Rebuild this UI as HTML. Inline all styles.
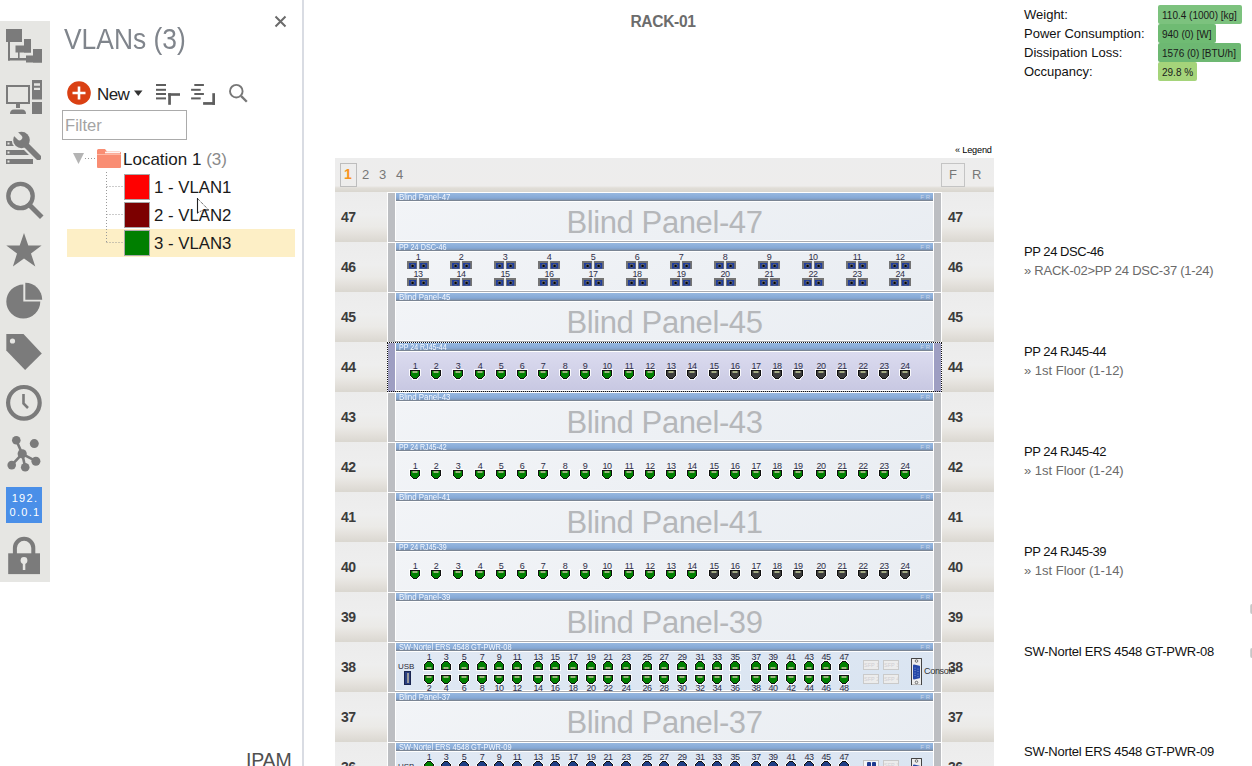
<!DOCTYPE html><html><head><meta charset="utf-8"><style>
*{margin:0;padding:0;box-sizing:border-box}
html,body{width:1252px;height:766px;overflow:hidden;background:#fff;font-family:"Liberation Sans",sans-serif;position:relative}
.a{position:absolute}
.num{position:absolute;width:52px;height:50px;background:linear-gradient(#ececec 0%,#eeeeee 45%,#ebeae7 70%,#e4e1dc 84%,#dad7d0 100%);font-weight:bold;font-size:14px;color:#3c3c3c;line-height:14px}
.num span{position:absolute;left:6px;top:18px;letter-spacing:-0.6px}
.rail{position:absolute;width:7px;background:#b9bbbf}
.pb{position:absolute;left:395px;width:539px;height:50px;background:#fff;border-bottom:1px solid #a9abb0}
.hd{position:absolute;left:1px;top:1px;width:537px;height:8px;background:linear-gradient(#97b8e0,#86a9d6 70%,#7f96b4);border-bottom:1px solid #7a8594;color:#f4f8ff;font-size:8.6px;line-height:8px;padding-left:3px;white-space:nowrap;overflow:hidden}
.hd b{font-weight:normal;display:inline-block;transform-origin:0 50%}
.hd i{position:absolute;right:3px;top:0;font-style:normal;font-size:6px;color:#c9d6e8;letter-spacing:0px}
.bd{position:absolute;left:1px;top:10px;width:537px;height:38px;background:linear-gradient(160deg,#f2f4f7,#e9edf2)}
.bl{position:absolute;left:0;top:5px;width:537px;text-align:center;font-size:31px;line-height:31px;color:#b5b7ba;letter-spacing:-0.4px}
.lb{position:absolute;font-size:9px;line-height:9px;color:#2e2e48;text-align:center;width:20px;letter-spacing:-0.5px}
.inf{position:absolute;left:1024px;font-size:13px;line-height:15px;color:#111;white-space:nowrap}
.inf2{position:absolute;left:1024px;font-size:13px;line-height:15px;color:#6a6a6a;white-space:nowrap}

</style></head><body>
<svg width="0" height="0" style="position:absolute"><defs>
<g id="rjd"><path d="M-1,-1H11V6H10V7H9V8H8V10H2V8H1V7H0V6H-1Z" fill="#fff" opacity=".85"/><path d="M0,0H10V6H9V7H8V8H7V9H3V8H2V7H1V6H0Z" fill="#111"/><path d="M1,1H9V6H8V7H7V8H3V7H2V6H1Z" fill="currentColor"/><rect x="2.5" y="1.2" width="5" height="1.6" fill="#c2c89a"/><rect x="4.5" y="1.2" width="1" height="1.6" fill="#98a878"/></g>
<g id="dsc"><rect x="0" y="0" width="10" height="8" fill="#747474"/><rect x="12" y="0" width="10" height="8" fill="#747474"/><rect x="10" y="0" width="2" height="8" fill="#e4e7ec"/><rect x="2" y="2" width="7.2" height="5.6" fill="#1f3d9c"/><rect x="13" y="2" width="7.2" height="5.6" fill="#1f3d9c"/><circle cx="5.6" cy="4.8" r="2" fill="#6a6a6a"/><circle cx="16.6" cy="4.8" r="2" fill="#6a6a6a"/><circle cx="5.6" cy="4.9" r="1.2" fill="#050505"/><circle cx="16.6" cy="4.9" r="1.2" fill="#050505"/></g>
</defs></svg>
<div class="a" style="left:0;top:21px;width:50px;height:561px;background:#e6e6e3"></div>
<svg class="a" style="left:0;top:0" width="50" height="600" viewBox="0 0 50 600">
<g fill="#7b7b7b">
<rect x="6" y="29" width="16" height="13"/>
<rect x="15.5" y="45.5" width="15.5" height="7"/><rect x="24" y="39" width="7" height="13.5"/>
<rect x="26" y="55.5" width="16" height="7"/><rect x="33" y="49" width="9" height="13.5"/>
<rect x="8" y="42" width="2" height="18.5"/><rect x="8" y="58" width="18" height="2.5"/><rect x="18" y="52" width="1.6" height="6"/>
</g>
<g fill="#7b7b7b">
<path d="M6,85H30V104H6Z M8,87V102H28V87Z" fill-rule="evenodd"/>
<rect x="16" y="104" width="4" height="4"/>
<path d="M10,114 Q10,109.5 14,109.5 H22 Q26,109.5 26,114Z"/>
<path d="M32,80H42V99.5H32Z M34,83.3V85.8H40V83.3Z M34,87.7V90.1H40V87.7Z" fill-rule="evenodd"/>
<rect x="32" y="102" width="10" height="12"/>
</g>
<g fill="#7b7b7b">
<path d="M6,141H14L19,146H6Z M7.5,142.5V144.5H9.5V142.5Z" fill-rule="evenodd"/>
<path d="M6,150H24L29,155H6Z M7.5,151.5V153.5H9.5V151.5Z" fill-rule="evenodd"/>
<path d="M6,159H33V164H6Z M7.5,160.5V162.5H9.5V160.5Z" fill-rule="evenodd"/>
</g>
<mask id="wm"><rect x="0" y="120" width="50" height="50" fill="#fff"/><path d="M10,128 L19.5,137.5" stroke="#000" stroke-width="5.5" stroke-linecap="round"/></mask>
<g mask="url(#wm)"><circle cx="21.5" cy="140" r="9.8" fill="#e6e6e3"/><path d="M22,141 L38.5,157.5" stroke="#e6e6e3" stroke-width="8.6" stroke-linecap="round"/><circle cx="21.5" cy="140" r="8.3" fill="#7b7b7b"/><path d="M22,141 L38.5,157.5" stroke="#7b7b7b" stroke-width="5.8" stroke-linecap="round"/></g>
<circle cx="20.5" cy="196" r="12.2" fill="none" stroke="#7b7b7b" stroke-width="4.3"/>
<path d="M29.5,205 L40,215.5" stroke="#7b7b7b" stroke-width="5" stroke-linecap="square"/>
<path d="M24,233 L28.3,245.6 L41.6,245.6 L31,253.6 L35.3,266.6 L24,258.6 L12.9,266.6 L17,253.6 L6.3,245.6 L19.7,245.6Z" fill="#7b7b7b"/>
<path d="M23.3,284.6 A17,17 0 1 0 40.3,301.6 L23.3,301.6 Z" fill="#7b7b7b"/>
<path d="M25.3,282.8 A16.9,16.9 0 0 1 42.2,299.7 L25.3,299.7 Z" fill="#7b7b7b"/>
<path d="M6.3,334 H23.5 L41.8,353.4 L25.1,370.1 L6.3,350.5Z" fill="#7b7b7b"/>
<circle cx="12.5" cy="341" r="2.6" fill="#e6e6e3"/>
<circle cx="23.9" cy="402.8" r="15.8" fill="none" stroke="#7b7b7b" stroke-width="4.2"/>
<path d="M23.5,394 V403.5 L28,408" fill="none" stroke="#7b7b7b" stroke-width="2.6"/>
<g stroke="#7b7b7b" stroke-width="2.6"><path d="M22.2,453.8 L16.3,440.3 M22.2,453.8 L11.7,465.1 M22.2,453.8 L25.2,467.2 M22.2,453.8 L35.9,461.2"/></g>
<g fill="#7b7b7b"><circle cx="22.2" cy="453.8" r="4.6"/><circle cx="16.3" cy="440.3" r="4.3"/><circle cx="34.3" cy="443.6" r="4.5"/><circle cx="11.7" cy="465.1" r="4.3"/><circle cx="25.2" cy="467.2" r="4.3"/><circle cx="35.9" cy="461.2" r="4.5"/></g>
<rect x="6" y="487" width="36" height="36" fill="#4a8fe8"/>
<path d="M14.9,554 V548 A9.2,9.2 0 0 1 33.3,548 V554" fill="none" stroke="#7b7b7b" stroke-width="4"/>
<rect x="8.2" y="553.3" width="31.8" height="20.8" fill="#7b7b7b"/>
<circle cx="24" cy="560.5" r="3.4" fill="#e6e6e3"/><rect x="22.8" y="561" width="2.5" height="9" fill="#e6e6e3"/>
</svg>
<div class="a" style="left:7px;top:492px;width:36px;text-align:center;color:#fff;font-size:11px;line-height:13.5px;letter-spacing:1.3px">192.<br>0.0.1</div>
<div class="a" style="left:302px;top:0;width:2px;height:766px;background:#d9dce3"></div>
<div class="a" style="left:64px;top:22px;font-size:30px;line-height:34px;color:#80858c;white-space:nowrap;transform:scaleX(0.88);transform-origin:0 0">VLANs (3)</div>
<svg class="a" style="left:274px;top:15px" width="13" height="13"><path d="M1.5,1.5 L11.5,11.5 M11.5,1.5 L1.5,11.5" stroke="#6b6b6b" stroke-width="2"/></svg>
<svg class="a" style="left:67px;top:81px" width="24" height="24"><circle cx="12" cy="12" r="11.8" fill="#da4013"/><path d="M12,5.5V18.5M5.5,12H18.5" stroke="#fff" stroke-width="2.6"/></svg>
<div class="a" style="left:97px;top:85px;font-size:17px;line-height:19px;color:#222;letter-spacing:-0.6px">New</div>
<svg class="a" style="left:134px;top:90px" width="9" height="7"><path d="M0,0.5H8.5L4.25,6Z" fill="#333"/></svg>
<svg class="a" style="left:155px;top:83px" width="28" height="23"><g fill="#5e5e5e"><rect x="1" y="1" width="10" height="2"/><rect x="1" y="5.8" width="10" height="2"/><rect x="1" y="10" width="10" height="2"/><rect x="1" y="14.4" width="10" height="2"/><rect x="13.2" y="10.2" width="11.8" height="2.6"/><rect x="13.2" y="10.2" width="2.7" height="11.6"/></g></svg>
<svg class="a" style="left:190px;top:83px" width="28" height="23"><g fill="#5e5e5e"><rect x="4.3" y="1" width="9.6" height="2"/><rect x="1.1" y="5.8" width="9.6" height="2"/><rect x="4.3" y="10" width="9.6" height="2"/><rect x="1.1" y="14.4" width="9.6" height="2"/><rect x="22.3" y="10.2" width="2.7" height="11.6"/><rect x="13.1" y="19.1" width="11.9" height="2.7"/></g></svg>
<svg class="a" style="left:228px;top:83px" width="22" height="22"><circle cx="8.3" cy="8.2" r="6.3" fill="none" stroke="#777" stroke-width="1.9"/><path d="M13.2,13.1L18.8,18.8" stroke="#777" stroke-width="2.3"/></svg>
<div class="a" style="left:62px;top:110px;width:125px;height:30px;border:1px solid #ababab;background:#fff"></div>
<div class="a" style="left:65px;top:116px;font-size:16.6px;line-height:19px;color:#a4a4a4">Filter</div>
<div class="a" style="left:67px;top:229px;width:228px;height:28px;background:#fdefc6"></div>
<svg class="a" style="left:70px;top:145px" width="60" height="115">
<path d="M3,8H14L8.5,19Z" fill="#b4b4b4"/>
<g stroke="#999" stroke-width="1" stroke-dasharray="1,2" fill="none"><path d="M15,13.5H26"/><path d="M36.5,27V97.5"/><path d="M36.5,41.5H53M36.5,69.5H53M36.5,97.5H53"/></g>
</svg>
<svg class="a" style="left:96px;top:148px" width="26" height="21"><path d="M1,2.5Q1,1 2.5,1H9L11,3.5H23.5Q25,3.5 25,5V19Q25,20 24,20H2Q1,20 1,19Z" fill="#f98d73"/><path d="M1,6.5H25" stroke="#fdb9a6" stroke-width="1"/><path d="M9,4.5H24" stroke="#fff" stroke-width="1.6" opacity=".9"/></svg>
<div class="a" style="left:123px;top:150px;font-size:17px;line-height:19px;color:#1a1a1a;white-space:nowrap">Location 1 <span style="color:#8a8a8a">(3)</span></div>
<div class="a" style="left:124px;top:174px;width:26px;height:26px;background:#ff0000;border:1px solid #a9a9a9"></div>
<div class="a" style="left:154px;top:178px;font-size:16.8px;line-height:19px;color:#1a1a1a;white-space:nowrap">1 - VLAN1</div>
<div class="a" style="left:124px;top:202px;width:26px;height:26px;background:#7c0000;border:1px solid #a9a9a9"></div>
<div class="a" style="left:154px;top:206px;font-size:16.8px;line-height:19px;color:#1a1a1a;white-space:nowrap">2 - VLAN2</div>
<div class="a" style="left:124px;top:230px;width:26px;height:26px;background:#007f00;border:1px solid #a9a9a9"></div>
<div class="a" style="left:154px;top:234px;font-size:16.8px;line-height:19px;color:#1a1a1a;white-space:nowrap">3 - VLAN3</div>
<svg class="a" style="left:196px;top:197px" width="14" height="20"><path d="M1.5,1 V16.5" stroke="#222" stroke-width="1.1"/><path d="M2,2 L12.3,12.6" stroke="#333" stroke-width="1" stroke-dasharray="1,1"/><path d="M8,13H12.8" stroke="#222" stroke-width="1.2"/><path d="M2,15.5 L6.5,13.4" stroke="#333" stroke-width="1" stroke-dasharray="1,1"/></svg>
<div class="a" style="left:246px;top:750px;font-size:19.5px;line-height:20px;color:#505050;letter-spacing:-0.2px">IPAM</div>
<div class="a" style="left:332px;top:13px;width:662px;text-align:center;font-size:15.6px;font-weight:bold;line-height:18px;color:#6c6c6c;letter-spacing:-0.35px">RACK-01</div>
<div class="a" style="left:955px;top:145px;font-size:9.2px;line-height:11px;color:#000;white-space:nowrap;letter-spacing:-0.2px">« Legend</div>
<div class="a" style="left:335px;top:158px;width:659px;height:34px;background:linear-gradient(#ededed 0%,#eeedec 82%,#e1ded8 88%,#d9d6cf 100%)"></div>
<div class="a" style="left:340px;top:163px;width:17px;height:24px;border:1px solid #bdbdbd"></div>
<div class="a" style="left:344px;top:166px;font-size:14px;line-height:16px;font-weight:bold;color:#f7941d">1</div>
<div class="a" style="left:362px;top:167px;font-size:13px;line-height:15px;color:#777">2</div>
<div class="a" style="left:379px;top:167px;font-size:13px;line-height:15px;color:#777">3</div>
<div class="a" style="left:396px;top:167px;font-size:13px;line-height:15px;color:#777">4</div>
<div class="a" style="left:941px;top:163px;width:24px;height:24px;border:1px solid #c4c4c4"></div>
<div class="a" style="left:949px;top:167px;font-size:13px;line-height:15px;color:#777">F</div>
<div class="a" style="left:972px;top:167px;font-size:13px;line-height:15px;color:#777">R</div>
<div class="num" style="left:335px;top:192px"><span>47</span></div>
<div class="num" style="left:942px;top:192px"><span>47</span></div>
<div class="rail" style="left:388px;top:193px;height:49px;background:#bcbec2"></div>
<div class="rail" style="left:934px;top:193px;height:49px;background:#bcbec2"></div>
<div class="pb" style="top:192px"><div class="hd"><b style="transform:scaleX(0.92)">Blind Panel-47</b><i>F R</i></div><div class="bd" style="">
<div class="bl">Blind Panel-47</div>
</div></div>
<div class="num" style="left:335px;top:242px"><span>46</span></div>
<div class="num" style="left:942px;top:242px"><span>46</span></div>
<div class="rail" style="left:388px;top:243px;height:49px;background:#bcbec2"></div>
<div class="rail" style="left:934px;top:243px;height:49px;background:#bcbec2"></div>
<div class="pb" style="top:242px"><div class="hd"><b style="transform:scaleX(0.845)">PP 24 DSC-46</b><i>F R</i></div><div class="bd" style="">
</div></div>
<div class="lb" style="left:408px;top:253px">1</div>
<svg class="a" style="left:407px;top:261px" width="22" height="8"><use href="#dsc"/></svg>
<div class="lb" style="left:451px;top:253px">2</div>
<svg class="a" style="left:450px;top:261px" width="22" height="8"><use href="#dsc"/></svg>
<div class="lb" style="left:495px;top:253px">3</div>
<svg class="a" style="left:494px;top:261px" width="22" height="8"><use href="#dsc"/></svg>
<div class="lb" style="left:539px;top:253px">4</div>
<svg class="a" style="left:538px;top:261px" width="22" height="8"><use href="#dsc"/></svg>
<div class="lb" style="left:583px;top:253px">5</div>
<svg class="a" style="left:582px;top:261px" width="22" height="8"><use href="#dsc"/></svg>
<div class="lb" style="left:627px;top:253px">6</div>
<svg class="a" style="left:626px;top:261px" width="22" height="8"><use href="#dsc"/></svg>
<div class="lb" style="left:671px;top:253px">7</div>
<svg class="a" style="left:670px;top:261px" width="22" height="8"><use href="#dsc"/></svg>
<div class="lb" style="left:715px;top:253px">8</div>
<svg class="a" style="left:714px;top:261px" width="22" height="8"><use href="#dsc"/></svg>
<div class="lb" style="left:759px;top:253px">9</div>
<svg class="a" style="left:758px;top:261px" width="22" height="8"><use href="#dsc"/></svg>
<div class="lb" style="left:803px;top:253px">10</div>
<svg class="a" style="left:802px;top:261px" width="22" height="8"><use href="#dsc"/></svg>
<div class="lb" style="left:847px;top:253px">11</div>
<svg class="a" style="left:846px;top:261px" width="22" height="8"><use href="#dsc"/></svg>
<div class="lb" style="left:890px;top:253px">12</div>
<svg class="a" style="left:889px;top:261px" width="22" height="8"><use href="#dsc"/></svg>
<div class="lb" style="left:408px;top:270px">13</div>
<svg class="a" style="left:407px;top:278px" width="22" height="8"><use href="#dsc"/></svg>
<div class="lb" style="left:451px;top:270px">14</div>
<svg class="a" style="left:450px;top:278px" width="22" height="8"><use href="#dsc"/></svg>
<div class="lb" style="left:495px;top:270px">15</div>
<svg class="a" style="left:494px;top:278px" width="22" height="8"><use href="#dsc"/></svg>
<div class="lb" style="left:539px;top:270px">16</div>
<svg class="a" style="left:538px;top:278px" width="22" height="8"><use href="#dsc"/></svg>
<div class="lb" style="left:583px;top:270px">17</div>
<svg class="a" style="left:582px;top:278px" width="22" height="8"><use href="#dsc"/></svg>
<div class="lb" style="left:627px;top:270px">18</div>
<svg class="a" style="left:626px;top:278px" width="22" height="8"><use href="#dsc"/></svg>
<div class="lb" style="left:671px;top:270px">19</div>
<svg class="a" style="left:670px;top:278px" width="22" height="8"><use href="#dsc"/></svg>
<div class="lb" style="left:715px;top:270px">20</div>
<svg class="a" style="left:714px;top:278px" width="22" height="8"><use href="#dsc"/></svg>
<div class="lb" style="left:759px;top:270px">21</div>
<svg class="a" style="left:758px;top:278px" width="22" height="8"><use href="#dsc"/></svg>
<div class="lb" style="left:803px;top:270px">22</div>
<svg class="a" style="left:802px;top:278px" width="22" height="8"><use href="#dsc"/></svg>
<div class="lb" style="left:847px;top:270px">23</div>
<svg class="a" style="left:846px;top:278px" width="22" height="8"><use href="#dsc"/></svg>
<div class="lb" style="left:890px;top:270px">24</div>
<svg class="a" style="left:889px;top:278px" width="22" height="8"><use href="#dsc"/></svg>
<div class="num" style="left:335px;top:292px"><span>45</span></div>
<div class="num" style="left:942px;top:292px"><span>45</span></div>
<div class="rail" style="left:388px;top:293px;height:49px;background:#bcbec2"></div>
<div class="rail" style="left:934px;top:293px;height:49px;background:#bcbec2"></div>
<div class="pb" style="top:292px"><div class="hd"><b style="transform:scaleX(0.92)">Blind Panel-45</b><i>F R</i></div><div class="bd" style="">
<div class="bl">Blind Panel-45</div>
</div></div>
<div class="num" style="left:335px;top:342px"><span>44</span></div>
<div class="num" style="left:942px;top:342px"><span>44</span></div>
<div class="rail" style="left:388px;top:343px;height:49px;background:#9e9ec2"></div>
<div class="rail" style="left:934px;top:343px;height:49px;background:#9e9ec2"></div>
<div class="pb" style="top:342px"><div class="hd"><b style="transform:scaleX(0.82)">PP 24 RJ45-44</b><i>F R</i></div><div class="bd" style="background:linear-gradient(#dbdbef,#d2d2e9 50%,#c8c8e2)">
</div></div>
<div class="a" style="left:387px;top:342px;width:555px;height:50px;border:1px dotted #111"></div>
<div class="lb" style="left:405px;top:362px">1</div>
<svg class="a" style="left:410px;top:370px;color:#008000;overflow:visible" width="10" height="9"><use href="#rjd"/></svg>
<div class="lb" style="left:426px;top:362px">2</div>
<svg class="a" style="left:431px;top:370px;color:#008000;overflow:visible" width="10" height="9"><use href="#rjd"/></svg>
<div class="lb" style="left:448px;top:362px">3</div>
<svg class="a" style="left:453px;top:370px;color:#008000;overflow:visible" width="10" height="9"><use href="#rjd"/></svg>
<div class="lb" style="left:470px;top:362px">4</div>
<svg class="a" style="left:475px;top:370px;color:#008000;overflow:visible" width="10" height="9"><use href="#rjd"/></svg>
<div class="lb" style="left:491px;top:362px">5</div>
<svg class="a" style="left:496px;top:370px;color:#008000;overflow:visible" width="10" height="9"><use href="#rjd"/></svg>
<div class="lb" style="left:512px;top:362px">6</div>
<svg class="a" style="left:517px;top:370px;color:#008000;overflow:visible" width="10" height="9"><use href="#rjd"/></svg>
<div class="lb" style="left:533px;top:362px">7</div>
<svg class="a" style="left:538px;top:370px;color:#008000;overflow:visible" width="10" height="9"><use href="#rjd"/></svg>
<div class="lb" style="left:555px;top:362px">8</div>
<svg class="a" style="left:560px;top:370px;color:#008000;overflow:visible" width="10" height="9"><use href="#rjd"/></svg>
<div class="lb" style="left:575px;top:362px">9</div>
<svg class="a" style="left:580px;top:370px;color:#008000;overflow:visible" width="10" height="9"><use href="#rjd"/></svg>
<div class="lb" style="left:597px;top:362px">10</div>
<svg class="a" style="left:602px;top:370px;color:#008000;overflow:visible" width="10" height="9"><use href="#rjd"/></svg>
<div class="lb" style="left:619px;top:362px">11</div>
<svg class="a" style="left:624px;top:370px;color:#008000;overflow:visible" width="10" height="9"><use href="#rjd"/></svg>
<div class="lb" style="left:640px;top:362px">12</div>
<svg class="a" style="left:645px;top:370px;color:#008000;overflow:visible" width="10" height="9"><use href="#rjd"/></svg>
<div class="lb" style="left:661px;top:362px">13</div>
<svg class="a" style="left:666px;top:370px;color:#3c3c3c;overflow:visible" width="10" height="9"><use href="#rjd"/></svg>
<div class="lb" style="left:682px;top:362px">14</div>
<svg class="a" style="left:687px;top:370px;color:#3c3c3c;overflow:visible" width="10" height="9"><use href="#rjd"/></svg>
<div class="lb" style="left:704px;top:362px">15</div>
<svg class="a" style="left:709px;top:370px;color:#3c3c3c;overflow:visible" width="10" height="9"><use href="#rjd"/></svg>
<div class="lb" style="left:725px;top:362px">16</div>
<svg class="a" style="left:730px;top:370px;color:#3c3c3c;overflow:visible" width="10" height="9"><use href="#rjd"/></svg>
<div class="lb" style="left:746px;top:362px">17</div>
<svg class="a" style="left:751px;top:370px;color:#3c3c3c;overflow:visible" width="10" height="9"><use href="#rjd"/></svg>
<div class="lb" style="left:767px;top:362px">18</div>
<svg class="a" style="left:772px;top:370px;color:#3c3c3c;overflow:visible" width="10" height="9"><use href="#rjd"/></svg>
<div class="lb" style="left:788px;top:362px">19</div>
<svg class="a" style="left:793px;top:370px;color:#3c3c3c;overflow:visible" width="10" height="9"><use href="#rjd"/></svg>
<div class="lb" style="left:811px;top:362px">20</div>
<svg class="a" style="left:816px;top:370px;color:#3c3c3c;overflow:visible" width="10" height="9"><use href="#rjd"/></svg>
<div class="lb" style="left:832px;top:362px">21</div>
<svg class="a" style="left:837px;top:370px;color:#3c3c3c;overflow:visible" width="10" height="9"><use href="#rjd"/></svg>
<div class="lb" style="left:853px;top:362px">22</div>
<svg class="a" style="left:858px;top:370px;color:#3c3c3c;overflow:visible" width="10" height="9"><use href="#rjd"/></svg>
<div class="lb" style="left:874px;top:362px">23</div>
<svg class="a" style="left:879px;top:370px;color:#3c3c3c;overflow:visible" width="10" height="9"><use href="#rjd"/></svg>
<div class="lb" style="left:895px;top:362px">24</div>
<svg class="a" style="left:900px;top:370px;color:#3c3c3c;overflow:visible" width="10" height="9"><use href="#rjd"/></svg>
<div class="num" style="left:335px;top:392px"><span>43</span></div>
<div class="num" style="left:942px;top:392px"><span>43</span></div>
<div class="rail" style="left:388px;top:393px;height:49px;background:#bcbec2"></div>
<div class="rail" style="left:934px;top:393px;height:49px;background:#bcbec2"></div>
<div class="pb" style="top:392px"><div class="hd"><b style="transform:scaleX(0.92)">Blind Panel-43</b><i>F R</i></div><div class="bd" style="">
<div class="bl">Blind Panel-43</div>
</div></div>
<div class="num" style="left:335px;top:442px"><span>42</span></div>
<div class="num" style="left:942px;top:442px"><span>42</span></div>
<div class="rail" style="left:388px;top:443px;height:49px;background:#bcbec2"></div>
<div class="rail" style="left:934px;top:443px;height:49px;background:#bcbec2"></div>
<div class="pb" style="top:442px"><div class="hd"><b style="transform:scaleX(0.82)">PP 24 RJ45-42</b><i>F R</i></div><div class="bd" style="">
</div></div>
<div class="lb" style="left:405px;top:462px">1</div>
<svg class="a" style="left:410px;top:470px;color:#008000;overflow:visible" width="10" height="9"><use href="#rjd"/></svg>
<div class="lb" style="left:426px;top:462px">2</div>
<svg class="a" style="left:431px;top:470px;color:#008000;overflow:visible" width="10" height="9"><use href="#rjd"/></svg>
<div class="lb" style="left:448px;top:462px">3</div>
<svg class="a" style="left:453px;top:470px;color:#008000;overflow:visible" width="10" height="9"><use href="#rjd"/></svg>
<div class="lb" style="left:470px;top:462px">4</div>
<svg class="a" style="left:475px;top:470px;color:#008000;overflow:visible" width="10" height="9"><use href="#rjd"/></svg>
<div class="lb" style="left:491px;top:462px">5</div>
<svg class="a" style="left:496px;top:470px;color:#008000;overflow:visible" width="10" height="9"><use href="#rjd"/></svg>
<div class="lb" style="left:512px;top:462px">6</div>
<svg class="a" style="left:517px;top:470px;color:#008000;overflow:visible" width="10" height="9"><use href="#rjd"/></svg>
<div class="lb" style="left:533px;top:462px">7</div>
<svg class="a" style="left:538px;top:470px;color:#008000;overflow:visible" width="10" height="9"><use href="#rjd"/></svg>
<div class="lb" style="left:555px;top:462px">8</div>
<svg class="a" style="left:560px;top:470px;color:#008000;overflow:visible" width="10" height="9"><use href="#rjd"/></svg>
<div class="lb" style="left:575px;top:462px">9</div>
<svg class="a" style="left:580px;top:470px;color:#008000;overflow:visible" width="10" height="9"><use href="#rjd"/></svg>
<div class="lb" style="left:597px;top:462px">10</div>
<svg class="a" style="left:602px;top:470px;color:#008000;overflow:visible" width="10" height="9"><use href="#rjd"/></svg>
<div class="lb" style="left:619px;top:462px">11</div>
<svg class="a" style="left:624px;top:470px;color:#008000;overflow:visible" width="10" height="9"><use href="#rjd"/></svg>
<div class="lb" style="left:640px;top:462px">12</div>
<svg class="a" style="left:645px;top:470px;color:#008000;overflow:visible" width="10" height="9"><use href="#rjd"/></svg>
<div class="lb" style="left:661px;top:462px">13</div>
<svg class="a" style="left:666px;top:470px;color:#008000;overflow:visible" width="10" height="9"><use href="#rjd"/></svg>
<div class="lb" style="left:682px;top:462px">14</div>
<svg class="a" style="left:687px;top:470px;color:#008000;overflow:visible" width="10" height="9"><use href="#rjd"/></svg>
<div class="lb" style="left:704px;top:462px">15</div>
<svg class="a" style="left:709px;top:470px;color:#008000;overflow:visible" width="10" height="9"><use href="#rjd"/></svg>
<div class="lb" style="left:725px;top:462px">16</div>
<svg class="a" style="left:730px;top:470px;color:#008000;overflow:visible" width="10" height="9"><use href="#rjd"/></svg>
<div class="lb" style="left:746px;top:462px">17</div>
<svg class="a" style="left:751px;top:470px;color:#008000;overflow:visible" width="10" height="9"><use href="#rjd"/></svg>
<div class="lb" style="left:767px;top:462px">18</div>
<svg class="a" style="left:772px;top:470px;color:#008000;overflow:visible" width="10" height="9"><use href="#rjd"/></svg>
<div class="lb" style="left:788px;top:462px">19</div>
<svg class="a" style="left:793px;top:470px;color:#008000;overflow:visible" width="10" height="9"><use href="#rjd"/></svg>
<div class="lb" style="left:811px;top:462px">20</div>
<svg class="a" style="left:816px;top:470px;color:#008000;overflow:visible" width="10" height="9"><use href="#rjd"/></svg>
<div class="lb" style="left:832px;top:462px">21</div>
<svg class="a" style="left:837px;top:470px;color:#008000;overflow:visible" width="10" height="9"><use href="#rjd"/></svg>
<div class="lb" style="left:853px;top:462px">22</div>
<svg class="a" style="left:858px;top:470px;color:#008000;overflow:visible" width="10" height="9"><use href="#rjd"/></svg>
<div class="lb" style="left:874px;top:462px">23</div>
<svg class="a" style="left:879px;top:470px;color:#008000;overflow:visible" width="10" height="9"><use href="#rjd"/></svg>
<div class="lb" style="left:895px;top:462px">24</div>
<svg class="a" style="left:900px;top:470px;color:#008000;overflow:visible" width="10" height="9"><use href="#rjd"/></svg>
<div class="num" style="left:335px;top:492px"><span>41</span></div>
<div class="num" style="left:942px;top:492px"><span>41</span></div>
<div class="rail" style="left:388px;top:493px;height:49px;background:#bcbec2"></div>
<div class="rail" style="left:934px;top:493px;height:49px;background:#bcbec2"></div>
<div class="pb" style="top:492px"><div class="hd"><b style="transform:scaleX(0.92)">Blind Panel-41</b><i>F R</i></div><div class="bd" style="">
<div class="bl">Blind Panel-41</div>
</div></div>
<div class="num" style="left:335px;top:542px"><span>40</span></div>
<div class="num" style="left:942px;top:542px"><span>40</span></div>
<div class="rail" style="left:388px;top:543px;height:49px;background:#bcbec2"></div>
<div class="rail" style="left:934px;top:543px;height:49px;background:#bcbec2"></div>
<div class="pb" style="top:542px"><div class="hd"><b style="transform:scaleX(0.82)">PP 24 RJ45-39</b><i>F R</i></div><div class="bd" style="">
</div></div>
<div class="lb" style="left:405px;top:562px">1</div>
<svg class="a" style="left:410px;top:570px;color:#008000;overflow:visible" width="10" height="9"><use href="#rjd"/></svg>
<div class="lb" style="left:426px;top:562px">2</div>
<svg class="a" style="left:431px;top:570px;color:#008000;overflow:visible" width="10" height="9"><use href="#rjd"/></svg>
<div class="lb" style="left:448px;top:562px">3</div>
<svg class="a" style="left:453px;top:570px;color:#008000;overflow:visible" width="10" height="9"><use href="#rjd"/></svg>
<div class="lb" style="left:470px;top:562px">4</div>
<svg class="a" style="left:475px;top:570px;color:#008000;overflow:visible" width="10" height="9"><use href="#rjd"/></svg>
<div class="lb" style="left:491px;top:562px">5</div>
<svg class="a" style="left:496px;top:570px;color:#008000;overflow:visible" width="10" height="9"><use href="#rjd"/></svg>
<div class="lb" style="left:512px;top:562px">6</div>
<svg class="a" style="left:517px;top:570px;color:#008000;overflow:visible" width="10" height="9"><use href="#rjd"/></svg>
<div class="lb" style="left:533px;top:562px">7</div>
<svg class="a" style="left:538px;top:570px;color:#008000;overflow:visible" width="10" height="9"><use href="#rjd"/></svg>
<div class="lb" style="left:555px;top:562px">8</div>
<svg class="a" style="left:560px;top:570px;color:#008000;overflow:visible" width="10" height="9"><use href="#rjd"/></svg>
<div class="lb" style="left:575px;top:562px">9</div>
<svg class="a" style="left:580px;top:570px;color:#008000;overflow:visible" width="10" height="9"><use href="#rjd"/></svg>
<div class="lb" style="left:597px;top:562px">10</div>
<svg class="a" style="left:602px;top:570px;color:#008000;overflow:visible" width="10" height="9"><use href="#rjd"/></svg>
<div class="lb" style="left:619px;top:562px">11</div>
<svg class="a" style="left:624px;top:570px;color:#008000;overflow:visible" width="10" height="9"><use href="#rjd"/></svg>
<div class="lb" style="left:640px;top:562px">12</div>
<svg class="a" style="left:645px;top:570px;color:#008000;overflow:visible" width="10" height="9"><use href="#rjd"/></svg>
<div class="lb" style="left:661px;top:562px">13</div>
<svg class="a" style="left:666px;top:570px;color:#008000;overflow:visible" width="10" height="9"><use href="#rjd"/></svg>
<div class="lb" style="left:682px;top:562px">14</div>
<svg class="a" style="left:687px;top:570px;color:#008000;overflow:visible" width="10" height="9"><use href="#rjd"/></svg>
<div class="lb" style="left:704px;top:562px">15</div>
<svg class="a" style="left:709px;top:570px;color:#3c3c3c;overflow:visible" width="10" height="9"><use href="#rjd"/></svg>
<div class="lb" style="left:725px;top:562px">16</div>
<svg class="a" style="left:730px;top:570px;color:#3c3c3c;overflow:visible" width="10" height="9"><use href="#rjd"/></svg>
<div class="lb" style="left:746px;top:562px">17</div>
<svg class="a" style="left:751px;top:570px;color:#3c3c3c;overflow:visible" width="10" height="9"><use href="#rjd"/></svg>
<div class="lb" style="left:767px;top:562px">18</div>
<svg class="a" style="left:772px;top:570px;color:#3c3c3c;overflow:visible" width="10" height="9"><use href="#rjd"/></svg>
<div class="lb" style="left:788px;top:562px">19</div>
<svg class="a" style="left:793px;top:570px;color:#3c3c3c;overflow:visible" width="10" height="9"><use href="#rjd"/></svg>
<div class="lb" style="left:811px;top:562px">20</div>
<svg class="a" style="left:816px;top:570px;color:#3c3c3c;overflow:visible" width="10" height="9"><use href="#rjd"/></svg>
<div class="lb" style="left:832px;top:562px">21</div>
<svg class="a" style="left:837px;top:570px;color:#3c3c3c;overflow:visible" width="10" height="9"><use href="#rjd"/></svg>
<div class="lb" style="left:853px;top:562px">22</div>
<svg class="a" style="left:858px;top:570px;color:#3c3c3c;overflow:visible" width="10" height="9"><use href="#rjd"/></svg>
<div class="lb" style="left:874px;top:562px">23</div>
<svg class="a" style="left:879px;top:570px;color:#3c3c3c;overflow:visible" width="10" height="9"><use href="#rjd"/></svg>
<div class="lb" style="left:895px;top:562px">24</div>
<svg class="a" style="left:900px;top:570px;color:#3c3c3c;overflow:visible" width="10" height="9"><use href="#rjd"/></svg>
<div class="num" style="left:335px;top:592px"><span>39</span></div>
<div class="num" style="left:942px;top:592px"><span>39</span></div>
<div class="rail" style="left:388px;top:593px;height:49px;background:#bcbec2"></div>
<div class="rail" style="left:934px;top:593px;height:49px;background:#bcbec2"></div>
<div class="pb" style="top:592px"><div class="hd"><b style="transform:scaleX(0.92)">Blind Panel-39</b><i>F R</i></div><div class="bd" style="">
<div class="bl">Blind Panel-39</div>
</div></div>
<div class="num" style="left:335px;top:642px"><span>38</span></div>
<div class="num" style="left:942px;top:642px"><span>38</span></div>
<div class="rail" style="left:388px;top:643px;height:49px;background:#bcbec2"></div>
<div class="rail" style="left:934px;top:643px;height:49px;background:#bcbec2"></div>
<div class="pb" style="top:642px"><div class="hd"><b style="transform:scaleX(0.864)">SW-Nortel ERS 4548 GT-PWR-08</b><i>F R</i></div><div class="bd" style="background:linear-gradient(170deg,#e1e9f4,#d9e4f1)">
</div></div>
<div class="lb" style="left:419px;top:653px">1</div>
<svg class="a" style="left:424px;top:661px;color:#008000;overflow:visible" width="10" height="9"><use href="#rjd" transform="translate(0,9) scale(1,-1)"/></svg>
<svg class="a" style="left:424px;top:675px;color:#008000;overflow:visible" width="10" height="9"><use href="#rjd"/></svg>
<div class="lb" style="left:419px;top:684px">2</div>
<div class="lb" style="left:436px;top:653px">3</div>
<svg class="a" style="left:441px;top:661px;color:#008000;overflow:visible" width="10" height="9"><use href="#rjd" transform="translate(0,9) scale(1,-1)"/></svg>
<svg class="a" style="left:441px;top:675px;color:#008000;overflow:visible" width="10" height="9"><use href="#rjd"/></svg>
<div class="lb" style="left:436px;top:684px">4</div>
<div class="lb" style="left:454px;top:653px">5</div>
<svg class="a" style="left:459px;top:661px;color:#008000;overflow:visible" width="10" height="9"><use href="#rjd" transform="translate(0,9) scale(1,-1)"/></svg>
<svg class="a" style="left:459px;top:675px;color:#008000;overflow:visible" width="10" height="9"><use href="#rjd"/></svg>
<div class="lb" style="left:454px;top:684px">6</div>
<div class="lb" style="left:472px;top:653px">7</div>
<svg class="a" style="left:477px;top:661px;color:#008000;overflow:visible" width="10" height="9"><use href="#rjd" transform="translate(0,9) scale(1,-1)"/></svg>
<svg class="a" style="left:477px;top:675px;color:#008000;overflow:visible" width="10" height="9"><use href="#rjd"/></svg>
<div class="lb" style="left:472px;top:684px">8</div>
<div class="lb" style="left:489px;top:653px">9</div>
<svg class="a" style="left:494px;top:661px;color:#008000;overflow:visible" width="10" height="9"><use href="#rjd" transform="translate(0,9) scale(1,-1)"/></svg>
<svg class="a" style="left:494px;top:675px;color:#008000;overflow:visible" width="10" height="9"><use href="#rjd"/></svg>
<div class="lb" style="left:489px;top:684px">10</div>
<div class="lb" style="left:507px;top:653px">11</div>
<svg class="a" style="left:512px;top:661px;color:#008000;overflow:visible" width="10" height="9"><use href="#rjd" transform="translate(0,9) scale(1,-1)"/></svg>
<svg class="a" style="left:512px;top:675px;color:#008000;overflow:visible" width="10" height="9"><use href="#rjd"/></svg>
<div class="lb" style="left:507px;top:684px">12</div>
<div class="lb" style="left:528px;top:653px">13</div>
<svg class="a" style="left:533px;top:661px;color:#008000;overflow:visible" width="10" height="9"><use href="#rjd" transform="translate(0,9) scale(1,-1)"/></svg>
<svg class="a" style="left:533px;top:675px;color:#008000;overflow:visible" width="10" height="9"><use href="#rjd"/></svg>
<div class="lb" style="left:528px;top:684px">14</div>
<div class="lb" style="left:545px;top:653px">15</div>
<svg class="a" style="left:550px;top:661px;color:#008000;overflow:visible" width="10" height="9"><use href="#rjd" transform="translate(0,9) scale(1,-1)"/></svg>
<svg class="a" style="left:550px;top:675px;color:#008000;overflow:visible" width="10" height="9"><use href="#rjd"/></svg>
<div class="lb" style="left:545px;top:684px">16</div>
<div class="lb" style="left:563px;top:653px">17</div>
<svg class="a" style="left:568px;top:661px;color:#008000;overflow:visible" width="10" height="9"><use href="#rjd" transform="translate(0,9) scale(1,-1)"/></svg>
<svg class="a" style="left:568px;top:675px;color:#008000;overflow:visible" width="10" height="9"><use href="#rjd"/></svg>
<div class="lb" style="left:563px;top:684px">18</div>
<div class="lb" style="left:581px;top:653px">19</div>
<svg class="a" style="left:586px;top:661px;color:#008000;overflow:visible" width="10" height="9"><use href="#rjd" transform="translate(0,9) scale(1,-1)"/></svg>
<svg class="a" style="left:586px;top:675px;color:#008000;overflow:visible" width="10" height="9"><use href="#rjd"/></svg>
<div class="lb" style="left:581px;top:684px">20</div>
<div class="lb" style="left:598px;top:653px">21</div>
<svg class="a" style="left:603px;top:661px;color:#008000;overflow:visible" width="10" height="9"><use href="#rjd" transform="translate(0,9) scale(1,-1)"/></svg>
<svg class="a" style="left:603px;top:675px;color:#008000;overflow:visible" width="10" height="9"><use href="#rjd"/></svg>
<div class="lb" style="left:598px;top:684px">22</div>
<div class="lb" style="left:616px;top:653px">23</div>
<svg class="a" style="left:621px;top:661px;color:#008000;overflow:visible" width="10" height="9"><use href="#rjd" transform="translate(0,9) scale(1,-1)"/></svg>
<svg class="a" style="left:621px;top:675px;color:#008000;overflow:visible" width="10" height="9"><use href="#rjd"/></svg>
<div class="lb" style="left:616px;top:684px">24</div>
<div class="lb" style="left:637px;top:653px">25</div>
<svg class="a" style="left:642px;top:661px;color:#008000;overflow:visible" width="10" height="9"><use href="#rjd" transform="translate(0,9) scale(1,-1)"/></svg>
<svg class="a" style="left:642px;top:675px;color:#008000;overflow:visible" width="10" height="9"><use href="#rjd"/></svg>
<div class="lb" style="left:637px;top:684px">26</div>
<div class="lb" style="left:654px;top:653px">27</div>
<svg class="a" style="left:659px;top:661px;color:#008000;overflow:visible" width="10" height="9"><use href="#rjd" transform="translate(0,9) scale(1,-1)"/></svg>
<svg class="a" style="left:659px;top:675px;color:#008000;overflow:visible" width="10" height="9"><use href="#rjd"/></svg>
<div class="lb" style="left:654px;top:684px">28</div>
<div class="lb" style="left:672px;top:653px">29</div>
<svg class="a" style="left:677px;top:661px;color:#008000;overflow:visible" width="10" height="9"><use href="#rjd" transform="translate(0,9) scale(1,-1)"/></svg>
<svg class="a" style="left:677px;top:675px;color:#008000;overflow:visible" width="10" height="9"><use href="#rjd"/></svg>
<div class="lb" style="left:672px;top:684px">30</div>
<div class="lb" style="left:690px;top:653px">31</div>
<svg class="a" style="left:695px;top:661px;color:#008000;overflow:visible" width="10" height="9"><use href="#rjd" transform="translate(0,9) scale(1,-1)"/></svg>
<svg class="a" style="left:695px;top:675px;color:#008000;overflow:visible" width="10" height="9"><use href="#rjd"/></svg>
<div class="lb" style="left:690px;top:684px">32</div>
<div class="lb" style="left:707px;top:653px">33</div>
<svg class="a" style="left:712px;top:661px;color:#008000;overflow:visible" width="10" height="9"><use href="#rjd" transform="translate(0,9) scale(1,-1)"/></svg>
<svg class="a" style="left:712px;top:675px;color:#008000;overflow:visible" width="10" height="9"><use href="#rjd"/></svg>
<div class="lb" style="left:707px;top:684px">34</div>
<div class="lb" style="left:725px;top:653px">35</div>
<svg class="a" style="left:730px;top:661px;color:#008000;overflow:visible" width="10" height="9"><use href="#rjd" transform="translate(0,9) scale(1,-1)"/></svg>
<svg class="a" style="left:730px;top:675px;color:#008000;overflow:visible" width="10" height="9"><use href="#rjd"/></svg>
<div class="lb" style="left:725px;top:684px">36</div>
<div class="lb" style="left:746px;top:653px">37</div>
<svg class="a" style="left:751px;top:661px;color:#008000;overflow:visible" width="10" height="9"><use href="#rjd" transform="translate(0,9) scale(1,-1)"/></svg>
<svg class="a" style="left:751px;top:675px;color:#008000;overflow:visible" width="10" height="9"><use href="#rjd"/></svg>
<div class="lb" style="left:746px;top:684px">38</div>
<div class="lb" style="left:763px;top:653px">39</div>
<svg class="a" style="left:768px;top:661px;color:#008000;overflow:visible" width="10" height="9"><use href="#rjd" transform="translate(0,9) scale(1,-1)"/></svg>
<svg class="a" style="left:768px;top:675px;color:#008000;overflow:visible" width="10" height="9"><use href="#rjd"/></svg>
<div class="lb" style="left:763px;top:684px">40</div>
<div class="lb" style="left:781px;top:653px">41</div>
<svg class="a" style="left:786px;top:661px;color:#008000;overflow:visible" width="10" height="9"><use href="#rjd" transform="translate(0,9) scale(1,-1)"/></svg>
<svg class="a" style="left:786px;top:675px;color:#008000;overflow:visible" width="10" height="9"><use href="#rjd"/></svg>
<div class="lb" style="left:781px;top:684px">42</div>
<div class="lb" style="left:799px;top:653px">43</div>
<svg class="a" style="left:804px;top:661px;color:#008000;overflow:visible" width="10" height="9"><use href="#rjd" transform="translate(0,9) scale(1,-1)"/></svg>
<svg class="a" style="left:804px;top:675px;color:#008000;overflow:visible" width="10" height="9"><use href="#rjd"/></svg>
<div class="lb" style="left:799px;top:684px">44</div>
<div class="lb" style="left:816px;top:653px">45</div>
<svg class="a" style="left:821px;top:661px;color:#008000;overflow:visible" width="10" height="9"><use href="#rjd" transform="translate(0,9) scale(1,-1)"/></svg>
<svg class="a" style="left:821px;top:675px;color:#008000;overflow:visible" width="10" height="9"><use href="#rjd"/></svg>
<div class="lb" style="left:816px;top:684px">46</div>
<div class="lb" style="left:834px;top:653px">47</div>
<svg class="a" style="left:839px;top:661px;color:#008000;overflow:visible" width="10" height="9"><use href="#rjd" transform="translate(0,9) scale(1,-1)"/></svg>
<svg class="a" style="left:839px;top:675px;color:#008000;overflow:visible" width="10" height="9"><use href="#rjd"/></svg>
<div class="lb" style="left:834px;top:684px">48</div>
<div class="a" style="left:398px;top:663px;font-size:8px;line-height:8px;color:#2a2a3a">USB</div>
<div class="a" style="left:404px;top:671px;width:7px;height:14px;background:#2a3f80;border:1px solid #1a2550"><div style="position:absolute;left:2px;top:1px;width:2px;height:10px;background:#999"></div></div>
<div class="a" style="left:863px;top:660px;width:16px;height:10px;border:1px solid #cacaca;background:#ececec;font-size:5.5px;line-height:8px;color:#cfcfd4;text-align:center;white-space:nowrap;overflow:hidden">SFP 1</div>
<div class="a" style="left:883px;top:660px;width:16px;height:10px;border:1px solid #cacaca;background:#ececec;font-size:5.5px;line-height:8px;color:#cfcfd4;text-align:center;white-space:nowrap;overflow:hidden">SFP 3</div>
<div class="a" style="left:863px;top:674px;width:16px;height:10px;border:1px solid #cacaca;background:#ececec;font-size:5.5px;line-height:8px;color:#cfcfd4;text-align:center;white-space:nowrap;overflow:hidden">SFP 2</div>
<div class="a" style="left:883px;top:674px;width:16px;height:10px;border:1px solid #cacaca;background:#ececec;font-size:5.5px;line-height:8px;color:#cfcfd4;text-align:center;white-space:nowrap;overflow:hidden">SFP 4</div>
<svg class="a" style="left:911px;top:658px" width="11" height="27"><rect x="0.5" y="0.5" width="10" height="26.5" fill="#eeeeee" stroke="#8a8a8a"/><path d="M0.5,27V0.5H10.5V27" fill="none" stroke="#444" stroke-width="1"/><circle cx="5.5" cy="3" r="1.3" fill="none" stroke="#555" stroke-width="0.8"/><circle cx="5.5" cy="24.5" r="1.3" fill="none" stroke="#555" stroke-width="0.8"/><path d="M2,7.5 Q2,6.5 3,6.5 L8.5,7.8 Q9,8 9,8.8 V19.2 Q9,20 8.5,20.2 L3,21.5 Q2,21.5 2,20.5Z" fill="#2447a8"/><g fill="#9ab0e0"><circle cx="4" cy="10" r=".5"/><circle cx="4" cy="12.5" r=".5"/><circle cx="4" cy="15" r=".5"/><circle cx="4" cy="17.5" r=".5"/><circle cx="7" cy="11" r=".5"/><circle cx="7" cy="13.5" r=".5"/><circle cx="7" cy="16" r=".5"/><circle cx="7" cy="18.5" r=".5"/></g></svg>
<div class="a" style="left:924px;top:667px;font-size:9px;line-height:9px;color:#333;letter-spacing:-0.3px">Console</div>
<div class="num" style="left:335px;top:692px"><span>37</span></div>
<div class="num" style="left:942px;top:692px"><span>37</span></div>
<div class="rail" style="left:388px;top:693px;height:49px;background:#bcbec2"></div>
<div class="rail" style="left:934px;top:693px;height:49px;background:#bcbec2"></div>
<div class="pb" style="top:692px"><div class="hd"><b style="transform:scaleX(0.92)">Blind Panel-37</b><i>F R</i></div><div class="bd" style="">
<div class="bl">Blind Panel-37</div>
</div></div>
<div class="num" style="left:335px;top:742px"><span>36</span></div>
<div class="num" style="left:942px;top:742px"><span>36</span></div>
<div class="rail" style="left:388px;top:743px;height:49px;background:#bcbec2"></div>
<div class="rail" style="left:934px;top:743px;height:49px;background:#bcbec2"></div>
<div class="pb" style="top:742px"><div class="hd"><b style="transform:scaleX(0.864)">SW-Nortel ERS 4548 GT-PWR-09</b><i>F R</i></div><div class="bd" style="background:linear-gradient(170deg,#e1e9f4,#d9e4f1)">
</div></div>
<div class="lb" style="left:419px;top:753px">1</div>
<svg class="a" style="left:424px;top:761px;color:#008000;overflow:visible" width="10" height="9"><use href="#rjd" transform="translate(0,9) scale(1,-1)"/></svg>
<svg class="a" style="left:424px;top:775px;color:#1f3f85;overflow:visible" width="10" height="9"><use href="#rjd"/></svg>
<div class="lb" style="left:419px;top:784px">2</div>
<div class="lb" style="left:436px;top:753px">3</div>
<svg class="a" style="left:441px;top:761px;color:#1f3f85;overflow:visible" width="10" height="9"><use href="#rjd" transform="translate(0,9) scale(1,-1)"/></svg>
<svg class="a" style="left:441px;top:775px;color:#1f3f85;overflow:visible" width="10" height="9"><use href="#rjd"/></svg>
<div class="lb" style="left:436px;top:784px">4</div>
<div class="lb" style="left:454px;top:753px">5</div>
<svg class="a" style="left:459px;top:761px;color:#1f3f85;overflow:visible" width="10" height="9"><use href="#rjd" transform="translate(0,9) scale(1,-1)"/></svg>
<svg class="a" style="left:459px;top:775px;color:#1f3f85;overflow:visible" width="10" height="9"><use href="#rjd"/></svg>
<div class="lb" style="left:454px;top:784px">6</div>
<div class="lb" style="left:472px;top:753px">7</div>
<svg class="a" style="left:477px;top:761px;color:#1f3f85;overflow:visible" width="10" height="9"><use href="#rjd" transform="translate(0,9) scale(1,-1)"/></svg>
<svg class="a" style="left:477px;top:775px;color:#1f3f85;overflow:visible" width="10" height="9"><use href="#rjd"/></svg>
<div class="lb" style="left:472px;top:784px">8</div>
<div class="lb" style="left:489px;top:753px">9</div>
<svg class="a" style="left:494px;top:761px;color:#1f3f85;overflow:visible" width="10" height="9"><use href="#rjd" transform="translate(0,9) scale(1,-1)"/></svg>
<svg class="a" style="left:494px;top:775px;color:#1f3f85;overflow:visible" width="10" height="9"><use href="#rjd"/></svg>
<div class="lb" style="left:489px;top:784px">10</div>
<div class="lb" style="left:507px;top:753px">11</div>
<svg class="a" style="left:512px;top:761px;color:#1f3f85;overflow:visible" width="10" height="9"><use href="#rjd" transform="translate(0,9) scale(1,-1)"/></svg>
<svg class="a" style="left:512px;top:775px;color:#1f3f85;overflow:visible" width="10" height="9"><use href="#rjd"/></svg>
<div class="lb" style="left:507px;top:784px">12</div>
<div class="lb" style="left:528px;top:753px">13</div>
<svg class="a" style="left:533px;top:761px;color:#1f3f85;overflow:visible" width="10" height="9"><use href="#rjd" transform="translate(0,9) scale(1,-1)"/></svg>
<svg class="a" style="left:533px;top:775px;color:#1f3f85;overflow:visible" width="10" height="9"><use href="#rjd"/></svg>
<div class="lb" style="left:528px;top:784px">14</div>
<div class="lb" style="left:545px;top:753px">15</div>
<svg class="a" style="left:550px;top:761px;color:#1f3f85;overflow:visible" width="10" height="9"><use href="#rjd" transform="translate(0,9) scale(1,-1)"/></svg>
<svg class="a" style="left:550px;top:775px;color:#1f3f85;overflow:visible" width="10" height="9"><use href="#rjd"/></svg>
<div class="lb" style="left:545px;top:784px">16</div>
<div class="lb" style="left:563px;top:753px">17</div>
<svg class="a" style="left:568px;top:761px;color:#1f3f85;overflow:visible" width="10" height="9"><use href="#rjd" transform="translate(0,9) scale(1,-1)"/></svg>
<svg class="a" style="left:568px;top:775px;color:#1f3f85;overflow:visible" width="10" height="9"><use href="#rjd"/></svg>
<div class="lb" style="left:563px;top:784px">18</div>
<div class="lb" style="left:581px;top:753px">19</div>
<svg class="a" style="left:586px;top:761px;color:#1f3f85;overflow:visible" width="10" height="9"><use href="#rjd" transform="translate(0,9) scale(1,-1)"/></svg>
<svg class="a" style="left:586px;top:775px;color:#1f3f85;overflow:visible" width="10" height="9"><use href="#rjd"/></svg>
<div class="lb" style="left:581px;top:784px">20</div>
<div class="lb" style="left:598px;top:753px">21</div>
<svg class="a" style="left:603px;top:761px;color:#1f3f85;overflow:visible" width="10" height="9"><use href="#rjd" transform="translate(0,9) scale(1,-1)"/></svg>
<svg class="a" style="left:603px;top:775px;color:#1f3f85;overflow:visible" width="10" height="9"><use href="#rjd"/></svg>
<div class="lb" style="left:598px;top:784px">22</div>
<div class="lb" style="left:616px;top:753px">23</div>
<svg class="a" style="left:621px;top:761px;color:#1f3f85;overflow:visible" width="10" height="9"><use href="#rjd" transform="translate(0,9) scale(1,-1)"/></svg>
<svg class="a" style="left:621px;top:775px;color:#1f3f85;overflow:visible" width="10" height="9"><use href="#rjd"/></svg>
<div class="lb" style="left:616px;top:784px">24</div>
<div class="lb" style="left:637px;top:753px">25</div>
<svg class="a" style="left:642px;top:761px;color:#1f3f85;overflow:visible" width="10" height="9"><use href="#rjd" transform="translate(0,9) scale(1,-1)"/></svg>
<svg class="a" style="left:642px;top:775px;color:#1f3f85;overflow:visible" width="10" height="9"><use href="#rjd"/></svg>
<div class="lb" style="left:637px;top:784px">26</div>
<div class="lb" style="left:654px;top:753px">27</div>
<svg class="a" style="left:659px;top:761px;color:#1f3f85;overflow:visible" width="10" height="9"><use href="#rjd" transform="translate(0,9) scale(1,-1)"/></svg>
<svg class="a" style="left:659px;top:775px;color:#1f3f85;overflow:visible" width="10" height="9"><use href="#rjd"/></svg>
<div class="lb" style="left:654px;top:784px">28</div>
<div class="lb" style="left:672px;top:753px">29</div>
<svg class="a" style="left:677px;top:761px;color:#1f3f85;overflow:visible" width="10" height="9"><use href="#rjd" transform="translate(0,9) scale(1,-1)"/></svg>
<svg class="a" style="left:677px;top:775px;color:#1f3f85;overflow:visible" width="10" height="9"><use href="#rjd"/></svg>
<div class="lb" style="left:672px;top:784px">30</div>
<div class="lb" style="left:690px;top:753px">31</div>
<svg class="a" style="left:695px;top:761px;color:#1f3f85;overflow:visible" width="10" height="9"><use href="#rjd" transform="translate(0,9) scale(1,-1)"/></svg>
<svg class="a" style="left:695px;top:775px;color:#1f3f85;overflow:visible" width="10" height="9"><use href="#rjd"/></svg>
<div class="lb" style="left:690px;top:784px">32</div>
<div class="lb" style="left:707px;top:753px">33</div>
<svg class="a" style="left:712px;top:761px;color:#1f3f85;overflow:visible" width="10" height="9"><use href="#rjd" transform="translate(0,9) scale(1,-1)"/></svg>
<svg class="a" style="left:712px;top:775px;color:#1f3f85;overflow:visible" width="10" height="9"><use href="#rjd"/></svg>
<div class="lb" style="left:707px;top:784px">34</div>
<div class="lb" style="left:725px;top:753px">35</div>
<svg class="a" style="left:730px;top:761px;color:#1f3f85;overflow:visible" width="10" height="9"><use href="#rjd" transform="translate(0,9) scale(1,-1)"/></svg>
<svg class="a" style="left:730px;top:775px;color:#1f3f85;overflow:visible" width="10" height="9"><use href="#rjd"/></svg>
<div class="lb" style="left:725px;top:784px">36</div>
<div class="lb" style="left:746px;top:753px">37</div>
<svg class="a" style="left:751px;top:761px;color:#1f3f85;overflow:visible" width="10" height="9"><use href="#rjd" transform="translate(0,9) scale(1,-1)"/></svg>
<svg class="a" style="left:751px;top:775px;color:#1f3f85;overflow:visible" width="10" height="9"><use href="#rjd"/></svg>
<div class="lb" style="left:746px;top:784px">38</div>
<div class="lb" style="left:763px;top:753px">39</div>
<svg class="a" style="left:768px;top:761px;color:#1f3f85;overflow:visible" width="10" height="9"><use href="#rjd" transform="translate(0,9) scale(1,-1)"/></svg>
<svg class="a" style="left:768px;top:775px;color:#1f3f85;overflow:visible" width="10" height="9"><use href="#rjd"/></svg>
<div class="lb" style="left:763px;top:784px">40</div>
<div class="lb" style="left:781px;top:753px">41</div>
<svg class="a" style="left:786px;top:761px;color:#1f3f85;overflow:visible" width="10" height="9"><use href="#rjd" transform="translate(0,9) scale(1,-1)"/></svg>
<svg class="a" style="left:786px;top:775px;color:#1f3f85;overflow:visible" width="10" height="9"><use href="#rjd"/></svg>
<div class="lb" style="left:781px;top:784px">42</div>
<div class="lb" style="left:799px;top:753px">43</div>
<svg class="a" style="left:804px;top:761px;color:#1f3f85;overflow:visible" width="10" height="9"><use href="#rjd" transform="translate(0,9) scale(1,-1)"/></svg>
<svg class="a" style="left:804px;top:775px;color:#1f3f85;overflow:visible" width="10" height="9"><use href="#rjd"/></svg>
<div class="lb" style="left:799px;top:784px">44</div>
<div class="lb" style="left:816px;top:753px">45</div>
<svg class="a" style="left:821px;top:761px;color:#1f3f85;overflow:visible" width="10" height="9"><use href="#rjd" transform="translate(0,9) scale(1,-1)"/></svg>
<svg class="a" style="left:821px;top:775px;color:#1f3f85;overflow:visible" width="10" height="9"><use href="#rjd"/></svg>
<div class="lb" style="left:816px;top:784px">46</div>
<div class="lb" style="left:834px;top:753px">47</div>
<svg class="a" style="left:839px;top:761px;color:#1f3f85;overflow:visible" width="10" height="9"><use href="#rjd" transform="translate(0,9) scale(1,-1)"/></svg>
<svg class="a" style="left:839px;top:775px;color:#1f3f85;overflow:visible" width="10" height="9"><use href="#rjd"/></svg>
<div class="lb" style="left:834px;top:784px">48</div>
<div class="a" style="left:398px;top:763px;font-size:8px;line-height:8px;color:#2a2a3a">USB</div>
<div class="a" style="left:404px;top:771px;width:7px;height:14px;background:#2a3f80;border:1px solid #1a2550"><div style="position:absolute;left:2px;top:1px;width:2px;height:10px;background:#999"></div></div>
<div class="a" style="left:863px;top:760px;width:16px;height:10px;border:1px solid #c2c2c2;background:#f4f6f8"><div style="position:absolute;left:3px;top:1px;width:4px;height:6px;background:#1d3a90;border-radius:1px"></div><div style="position:absolute;left:8px;top:1px;width:4px;height:6px;background:#1d3a90;border-radius:1px"></div></div>
<div class="a" style="left:883px;top:760px;width:16px;height:10px;border:1px solid #cacaca;background:#ececec;font-size:5.5px;line-height:8px;color:#cfcfd4;text-align:center;white-space:nowrap;overflow:hidden">SFP 3</div>
<div class="a" style="left:863px;top:774px;width:16px;height:10px;border:1px solid #cacaca;background:#ececec;font-size:5.5px;line-height:8px;color:#cfcfd4;text-align:center;white-space:nowrap;overflow:hidden">SFP 2</div>
<div class="a" style="left:883px;top:774px;width:16px;height:10px;border:1px solid #cacaca;background:#ececec;font-size:5.5px;line-height:8px;color:#cfcfd4;text-align:center;white-space:nowrap;overflow:hidden">SFP 4</div>
<svg class="a" style="left:911px;top:758px" width="11" height="27"><rect x="0.5" y="0.5" width="10" height="26.5" fill="#eeeeee" stroke="#8a8a8a"/><path d="M0.5,27V0.5H10.5V27" fill="none" stroke="#444" stroke-width="1"/><circle cx="5.5" cy="3" r="1.3" fill="none" stroke="#555" stroke-width="0.8"/><circle cx="5.5" cy="24.5" r="1.3" fill="none" stroke="#555" stroke-width="0.8"/><path d="M2,7.5 Q2,6.5 3,6.5 L8.5,7.8 Q9,8 9,8.8 V19.2 Q9,20 8.5,20.2 L3,21.5 Q2,21.5 2,20.5Z" fill="#2447a8"/><g fill="#9ab0e0"><circle cx="4" cy="10" r=".5"/><circle cx="4" cy="12.5" r=".5"/><circle cx="4" cy="15" r=".5"/><circle cx="4" cy="17.5" r=".5"/><circle cx="7" cy="11" r=".5"/><circle cx="7" cy="13.5" r=".5"/><circle cx="7" cy="16" r=".5"/><circle cx="7" cy="18.5" r=".5"/></g></svg>
<div class="a" style="left:924px;top:767px;font-size:9px;line-height:9px;color:#333;letter-spacing:-0.3px">Console</div>
<div class="inf" style="top:7px">Weight:</div>
<div class="a" style="left:1158px;top:5px;width:84px;height:19px;background:#7cc27e;border-radius:2px;font-size:10px;line-height:21px;padding-left:4px;color:#1a1a1a;white-space:nowrap">110.4 (1000) [kg]</div>
<div class="inf" style="top:26px">Power Consumption:</div>
<div class="a" style="left:1158px;top:24px;width:58px;height:19px;background:#6fbb73;border-radius:2px;font-size:10px;line-height:21px;padding-left:4px;color:#1a1a1a;white-space:nowrap">940 (0) [W]</div>
<div class="inf" style="top:45px">Dissipation Loss:</div>
<div class="a" style="left:1158px;top:43px;width:83px;height:19px;background:#6db872;border-radius:2px;font-size:10px;line-height:21px;padding-left:4px;color:#1a1a1a;white-space:nowrap">1576 (0) [BTU/h]</div>
<div class="inf" style="top:64px">Occupancy:</div>
<div class="a" style="left:1158px;top:62px;width:39px;height:19px;background:#a5d47a;border-radius:2px;font-size:10px;line-height:21px;padding-left:4px;color:#1a1a1a;white-space:nowrap">29.8 %</div>
<div class="inf" style="top:244px;letter-spacing:-0.45px">PP 24 DSC-46</div>
<div class="inf2" style="top:263px;letter-spacing:-0.25px">» RACK-02>PP 24 DSC-37 (1-24)</div>
<div class="inf" style="top:344px;letter-spacing:-0.45px">PP 24 RJ45-44</div>
<div class="inf2" style="top:363px;letter-spacing:0">» 1st Floor (1-12)</div>
<div class="inf" style="top:444px;letter-spacing:-0.45px">PP 24 RJ45-42</div>
<div class="inf2" style="top:463px;letter-spacing:0">» 1st Floor (1-24)</div>
<div class="inf" style="top:544px;letter-spacing:-0.45px">PP 24 RJ45-39</div>
<div class="inf2" style="top:563px;letter-spacing:0">» 1st Floor (1-14)</div>
<div class="inf" style="top:644px;letter-spacing:-0.25px">SW-Nortel ERS 4548 GT-PWR-08</div>
<div class="inf" style="top:744px;letter-spacing:-0.25px">SW-Nortel ERS 4548 GT-PWR-09</div>
<div class="a" style="left:1250px;top:604px;width:4px;height:10px;border-radius:2px;background:linear-gradient(90deg,#d8d8d8,#a8a8a8)"></div>
<div class="a" style="left:1250px;top:648px;width:4px;height:10px;border-radius:2px;background:linear-gradient(90deg,#d8d8d8,#a8a8a8)"></div>
</body></html>
